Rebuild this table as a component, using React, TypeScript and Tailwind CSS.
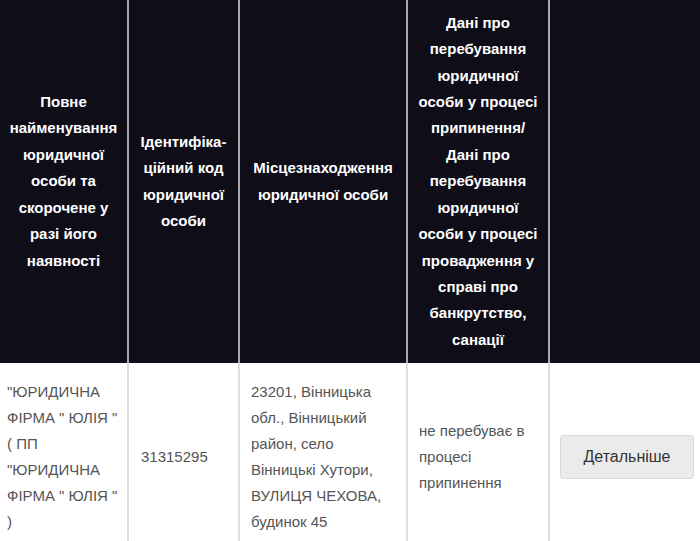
import React from "react";

const headers: string[][] = [
  ["Повне", "найменування", "юридичної", "особи та", "скорочене у", "разі його", "наявності"],
  ["Ідентифіка-", "ційний код", "юридичної", "особи"],
  ["Місцезнаходження", "юридичної особи"],
  [
    "Дані про",
    "перебування",
    "юридичної",
    "особи у процесі",
    "припинення/",
    "Дані про",
    "перебування",
    "юридичної",
    "особи у процесі",
    "провадження у",
    "справі про",
    "банкрутство,",
    "санації",
  ],
  [],
];

function Lines({ lines }: { lines: string[] }) {
  return (
    <>
      {lines.map((l, i) => (
        <span key={i} className="block whitespace-nowrap">
          {l}
        </span>
      ))}
    </>
  );
}

export default function App() {
  return (
    <div
      className="w-[700px] h-[541px] overflow-hidden bg-white"
      style={{ fontFamily: '"Liberation Sans", Arial, sans-serif' }}
    >
      <div className="grid grid-cols-[129px_111px_168px_142px_150px]">
        {headers.map((h, i) => (
          <div
            key={i}
            className={`h-[363px] bg-[#0e0d18] text-white font-bold text-[15px] leading-[26.4px] flex flex-col items-center justify-center text-center px-2 ${
              i < 4 ? "border-r-2 border-[#a8a8ad]" : ""
            }`}
          >
            <Lines lines={h} />
          </div>
        ))}

        <div className="h-[188px] border-r-2 border-[#dedede] pl-[7px] flex flex-col justify-center text-[15px] leading-[26px] text-[#555]">
          <Lines
            lines={[
              '"ЮРИДИЧНА',
              'ФІРМА " ЮЛІЯ "',
              "( ПП",
              '"ЮРИДИЧНА',
              'ФІРМА " ЮЛІЯ "',
              ")",
            ]}
          />
        </div>
        <div className="h-[188px] border-r-2 border-[#dedede] pl-[12px] flex flex-col justify-center text-[15px] leading-[26px] text-[#555]">
          <span>31315295</span>
        </div>
        <div className="h-[188px] border-r-2 border-[#dedede] pl-[11px] flex flex-col justify-center text-[15px] leading-[26px] text-[#555]">
          <Lines
            lines={[
              "23201, Вінницька",
              "обл., Вінницький",
              "район, село",
              "Вінницькі Хутори,",
              "ВУЛИЦЯ ЧЕХОВА,",
              "будинок 45",
            ]}
          />
        </div>
        <div className="h-[188px] border-r-2 border-[#dedede] pl-[11px] flex flex-col justify-center text-[15px] leading-[26px] text-[#555]">
          <Lines lines={["не перебуває в", "процесі", "припинення"]} />
        </div>
        <div className="h-[188px] pl-[10px] flex items-center">
          <button className="w-[134px] h-[44px] bg-[#ebebeb] border border-[#dadada] rounded-[3px] text-[16px] text-[#333]">
            Детальніше
          </button>
        </div>
      </div>
    </div>
  );
}
